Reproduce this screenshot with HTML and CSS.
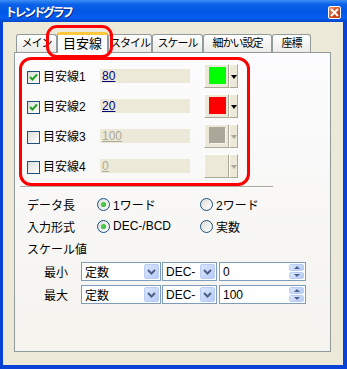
FILE: index.html
```
<!DOCTYPE html>
<html lang="ja">
<head>
    <meta charset="UTF-8">
    <title>トレンドグラフ</title>
    <link rel="stylesheet" href="styles.css">
</head>
<body>
    <div class="window">
        <div class="titlebar">
            <span class="title">トレンドグラフ</span>
            <span class="close">
                <svg width="9" height="9" viewBox="0 0 9 9"><path d="M1 1 L8 8 M8 1 L1 8" stroke="#fff" stroke-width="2"/></svg>
            </span>
        </div>
        <div class="frame">
            <div class="tabs">
                <div class="tab w-main">メイン</div>
                <div class="tab active w-line">目安線</div>
                <div class="tab w-style">スタイル</div>
                <div class="tab w-scale">スケール</div>
                <div class="tab w-detail">細かい設定</div>
                <div class="tab w-coord">座標</div>
            </div>
            <div class="panel">
                <div class="group">
                    <div class="row">
                        <span class="check on"><svg width="9" height="9" viewBox="0 0 9 9"><path d="M1 4 L3.5 6.5 L8 1.5" fill="none" stroke="#21a121" stroke-width="2"/></svg></span>
                        <span class="row-label">目安線1</span>
                        <span class="field"><u>80</u></span>
                        <span class="color-btn"><span class="swatch green"></span><span class="drop"><i class="tri"></i></span></span>
                    </div>
                    <div class="row">
                        <span class="check on"><svg width="9" height="9" viewBox="0 0 9 9"><path d="M1 4 L3.5 6.5 L8 1.5" fill="none" stroke="#21a121" stroke-width="2"/></svg></span>
                        <span class="row-label">目安線2</span>
                        <span class="field"><u>20</u></span>
                        <span class="color-btn"><span class="swatch red"></span><span class="drop"><i class="tri"></i></span></span>
                    </div>
                    <div class="row">
                        <span class="check"></span>
                        <span class="row-label">目安線3</span>
                        <span class="field off"><u>100</u></span>
                        <span class="color-btn"><span class="swatch gray"></span><span class="drop"><i class="tri off"></i></span></span>
                    </div>
                    <div class="row">
                        <span class="check"></span>
                        <span class="row-label">目安線4</span>
                        <span class="field off"><u>0</u></span>
                        <span class="color-btn"><span class="swatch none"></span><span class="drop"><i class="tri off"></i></span></span>
                    </div>
                </div>
                <div class="sep"></div>

                <div class="opts">
                    <div class="opt-row">
                        <span class="opt-label">データ長</span>
                        <span class="opt"><span class="radio on"></span>1ワード</span>
                        <span class="opt"><span class="radio"></span>2ワード</span>
                    </div>
                    <div class="opt-row">
                        <span class="opt-label">入力形式</span>
                        <span class="opt"><span class="radio on"></span>DEC-/BCD</span>
                        <span class="opt"><span class="radio"></span>実数</span>
                    </div>
                    <div class="opt-row">
                        <span class="opt-label">スケール値</span>
                    </div>
                </div>

                <div class="scale">
                    <div class="scale-row">
                        <span class="scale-label">最小</span>
                        <span class="combo w-kind"><span class="combo-text">定数</span><span class="combo-btn"><svg width="9" height="6" viewBox="0 0 9 6"><path d="M1 1 L4.5 4.5 L8 1" fill="none" stroke="#4d6185" stroke-width="2"/></svg></span></span>
                        <span class="combo w-fmt"><span class="combo-text">DEC-</span><span class="combo-btn"><svg width="9" height="6" viewBox="0 0 9 6"><path d="M1 1 L4.5 4.5 L8 1" fill="none" stroke="#4d6185" stroke-width="2"/></svg></span></span>
                        <span class="combo w-spin"><span class="combo-text">0</span><span class="spin"><span class="spin-up"><i class="up"></i></span><span class="spin-down"><i class="down"></i></span></span></span>
                    </div>
                    <div class="scale-row">
                        <span class="scale-label">最大</span>
                        <span class="combo w-kind"><span class="combo-text">定数</span><span class="combo-btn"><svg width="9" height="6" viewBox="0 0 9 6"><path d="M1 1 L4.5 4.5 L8 1" fill="none" stroke="#4d6185" stroke-width="2"/></svg></span></span>
                        <span class="combo w-fmt"><span class="combo-text">DEC-</span><span class="combo-btn"><svg width="9" height="6" viewBox="0 0 9 6"><path d="M1 1 L4.5 4.5 L8 1" fill="none" stroke="#4d6185" stroke-width="2"/></svg></span></span>
                        <span class="combo w-spin"><span class="combo-text">100</span><span class="spin"><span class="spin-up"><i class="up"></i></span><span class="spin-down"><i class="down"></i></span></span></span>
                    </div>
                </div>
            </div>
        </div>
        <div class="mark-tab"></div>
    </div>
</body>
</html>
```

FILE: styles.css
```
body {
    margin: 0;
    font-family: "Liberation Sans", "Noto Sans CJK JP", sans-serif;
    font-size: 12px;
    color: #000;
    background: #0a3fd0;
}
.window {
    position: relative;
    width: 347px;
    height: 369px;
    display: flex;
    flex-direction: column;
}
.titlebar {
    height: 22px;
    display: flex;
    align-items: center;
    justify-content: space-between;
    padding: 0 6px 0 5px;
    background: linear-gradient(#3d8df5 0%, #0a62e8 20%, #0055e5 55%, #0760f2 80%, #0046c8 100%);
}
.title {
    color: #fff;
    font-weight: bold;
    font-size: 12px;
    letter-spacing: -2.5px;
    text-shadow: 1px 1px #0b2a8a;
}
.close {
    width: 11px;
    height: 11px;
    margin-top: 2px;
    border: 1px solid #fff;
    border-radius: 2px;
    background: linear-gradient(135deg, #ec8d6b, #d4461b 60%, #c0350e);
    display: flex;
    align-items: center;
    justify-content: center;
}
.frame {
    flex: 1;
    background: #ece9d8;
    border-left: 3px solid #0842d6;
    border-right: 4px solid #0842d6;
    border-bottom: 4px solid #0842d6;
    padding: 10px 12px 0 11px;
}
.tabs {
    height: 20px;
    display: flex;
    align-items: flex-end;
    padding-left: 2px;
}
.tab {
    box-sizing: border-box;
    height: 18px;
    border: 1px solid #919b9c;
    border-bottom: none;
    border-radius: 3px 3px 0 0;
    background: linear-gradient(#ffffff, #ecebe6);
    text-align: center;
    font-size: 11px;
    line-height: 16px;
    letter-spacing: -1px;
    white-space: nowrap;
    overflow: hidden;
}
.tab.active {
    position: relative;
    z-index: 1;
    height: 21px;
    margin-bottom: -1px;
    border-top: 3px solid #ffc83c;
    background: #fcfcfe;
    line-height: 17px;
    font-size: 13px;
    letter-spacing: 0;
}
.w-main { width: 41px; }
.w-line { width: 51px; }
.w-style { width: 44px; }
.w-scale { width: 51px; }
.w-detail { width: 69px; }
.w-coord { width: 39px; }
.panel {
    box-sizing: border-box;
    height: 300px;
    border: 1px solid #919b9c;
    background: linear-gradient(#fcfcfe, #f4f3ee);
    padding: 4px 0 0 4px;
}
.group {
    box-sizing: border-box;
    width: 231px;
    height: 129px;
    border: 3px solid #ff0000;
    border-radius: 12px;
    padding: 1px 0 2px 5px;
}
.row {
    height: 30px;
    display: flex;
    align-items: center;
}
.check {
    box-sizing: border-box;
    width: 13px;
    height: 13px;
    margin: 2px 3px 0 0;
    border: 1px solid #1c5180;
    background: linear-gradient(135deg, #dcdcd7, #ffffff);
    display: flex;
    align-items: center;
    justify-content: center;
}
.row-label {
    width: 57px;
    line-height: 14px;
    margin-top: 2px;
}
.field {
    box-sizing: border-box;
    width: 90px;
    height: 14px;
    margin-right: 14px;
    padding-left: 2px;
    background: #ece9d8;
    color: #00007f;
    line-height: 14px;
}
.field.off {
    color: #aca899;
}
.color-btn {
    width: 34px;
    height: 24px;
    display: flex;
}
.swatch {
    box-sizing: border-box;
    width: 25px;
    height: 24px;
    border: 1px solid;
    border-color: #fff #aca899 #aca899 #fff;
    background: #ece9d8;
    padding: 2px 0 0 4px;
}
.swatch::after {
    content: "";
    display: block;
    width: 17px;
    height: 17px;
}
.swatch.green::after { background: #00ff00; }
.swatch.red::after { background: #ff0000; }
.swatch.gray::after {
    box-sizing: border-box;
    background: #aca899;
    border: 1px solid #f5f4ee;
    border-top-color: #aca899;
    border-left-color: #aca899;
}
.drop {
    box-sizing: border-box;
    width: 9px;
    height: 24px;
    border: 1px solid;
    border-color: #fff #aca899 #aca899 #fff;
    background: #ece9d8;
    display: flex;
    align-items: center;
    justify-content: center;
}
.tri {
    width: 0;
    height: 0;
    border-left: 3px solid transparent;
    border-right: 3px solid transparent;
    border-top: 4px solid #000;
    margin-top: 1px;
}
.tri.off {
    border-top-color: #aca899;
}
.sep {
    width: 253px;
    margin-left: 1px;
    border-top: 1px solid #aca899;
    border-bottom: 1px solid #fff;
}
.opts {
    margin-top: 5px;
    padding-left: 8px;
}
.opt-row {
    height: 22px;
    display: flex;
    align-items: center;
}
.opt-label {
    width: 70px;
}
.opt {
    width: 103px;
    display: flex;
    align-items: center;
}
.radio {
    box-sizing: border-box;
    width: 13px;
    height: 13px;
    margin-right: 3px;
    border: 1px solid #1c5180;
    border-radius: 50%;
    background: linear-gradient(135deg, #dcdcd7, #ffffff);
    display: flex;
    align-items: center;
    justify-content: center;
}
.radio.on::after {
    content: "";
    width: 5px;
    height: 5px;
    border-radius: 50%;
    background: radial-gradient(circle at 40% 40%, #55d755, #21a121);
}
.scale {
    margin-top: 3px;
    padding-left: 25px;
    display: flex;
    flex-direction: column;
    gap: 4px;
}
.scale-row {
    height: 19px;
    display: flex;
    align-items: center;
}
.scale-label {
    width: 37px;
}
.combo {
    box-sizing: border-box;
    height: 19px;
    border: 1px solid #7f9db9;
    background: #fff;
    display: flex;
    align-items: center;
    justify-content: space-between;
    padding: 0 1px 0 3px;
}
.w-kind { width: 80px; }
.w-fmt { width: 55px; margin-left: 1px; }
.w-spin { width: 87px; margin-left: 2px; }
.combo-btn {
    box-sizing: border-box;
    width: 15px;
    height: 15px;
    border: 1px solid #b9cdf7;
    border-radius: 2px;
    background: linear-gradient(135deg, #dbe6fd, #b6cbf6);
    display: flex;
    align-items: center;
    justify-content: center;
}
.spin {
    width: 15px;
    height: 15px;
    display: flex;
    flex-direction: column;
    gap: 1px;
}
.spin-up, .spin-down {
    box-sizing: border-box;
    flex: 1;
    border: 1px solid #b9cdf7;
    border-radius: 2px;
    background: linear-gradient(135deg, #dbe6fd, #b6cbf6);
    display: flex;
    align-items: center;
    justify-content: center;
}
.up {
    width: 0;
    height: 0;
    border-left: 3px solid transparent;
    border-right: 3px solid transparent;
    border-bottom: 3px solid #4d6185;
}
.down {
    width: 0;
    height: 0;
    border-left: 3px solid transparent;
    border-right: 3px solid transparent;
    border-top: 3px solid #4d6185;
}
.mark-tab {
    position: absolute;
    left: 46px;
    top: 25px;
    width: 67px;
    height: 33px;
    box-sizing: border-box;
    border: 3px solid #ff0000;
    border-radius: 11px;
    z-index: 2;
}
```
